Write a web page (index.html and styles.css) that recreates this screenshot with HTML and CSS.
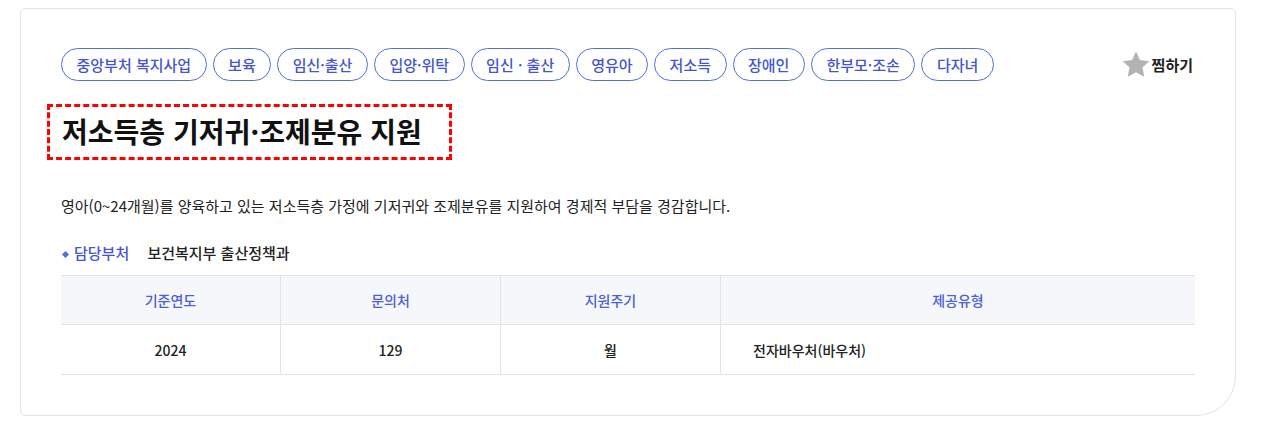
FILE: index.html
```html
<!DOCTYPE html>
<html lang="ko">
<head>
<meta charset="UTF-8">
<meta name="viewport" content="width=device-width, initial-scale=1.0">
<title>저소득층 기저귀·조제분유 지원</title>
<link rel="stylesheet" href="styles.css">
</head>
<body>
  <div class="card">
    <div class="top">
      <ul class="tags">
        <li>중앙부처 복지사업</li>
        <li>보육</li>
        <li>임신·출산</li>
        <li>입양·위탁</li>
        <li>임신 · 출산</li>
        <li>영유아</li>
        <li>저소득</li>
        <li>장애인</li>
        <li>한부모·조손</li>
        <li>다자녀</li>
      </ul>
      <button type="button" class="fav">
        <svg width="30" height="30" viewBox="0 0 24 24"><path d="M12 1.2l3.2 6.8 7.4.9-5.4 5.1 1.4 7.4L12 17.8l-6.6 3.6 1.4-7.4-5.4-5.1 7.4-.9z" fill="#b3b3b3"/></svg>
        찜하기
      </button>
    </div>

    <h2 class="title">저소득층 기저귀·조제분유 지원</h2>

    <p class="desc">영아(0~24개월)를 양육하고 있는 저소득층 가정에 기저귀와 조제분유를 지원하여 경제적 부담을 경감합니다.</p>

    <div class="dept">
      <span class="dept-label">담당부처</span>
      <span class="dept-name">보건복지부 출산정책과</span>
    </div>

    <table class="info">
      <thead>
        <tr>
          <th class="c1">기준연도</th>
          <th class="c2">문의처</th>
          <th class="c3">지원주기</th>
          <th>제공유형</th>
        </tr>
      </thead>
      <tbody>
        <tr>
          <td>2024</td>
          <td>129</td>
          <td>월</td>
          <td class="left">전자바우처(바우처)</td>
        </tr>
      </tbody>
    </table>
  </div>
</body>
</html>
```

FILE: styles.css
```css
body {
  margin: 0;
  background: #fff;
  font-family: "Noto Sans CJK KR", "Noto Sans", sans-serif;
  color: #222;
}
.card {
  margin: 8px 28px 0 20px;
  padding: 39px 40px 39px 40px;
  border: 1px solid #e2e2e2;
  border-radius: 6px 6px 40px 6px;
  height: 328px;
}
.top {
  display: flex;
  align-items: center;
  justify-content: space-between;
}
.tags {
  display: flex;
  gap: 6px;
  margin: 0;
  padding: 0;
  list-style: none;
}
.tags li {
  height: 33px;
  box-sizing: border-box;
  padding: 0 14.5px;
  border: 1px solid #4f6fdc;
  border-radius: 17px;
  color: #4455cf;
  font-size: 15px;
  font-weight: 500;
  line-height: 31px;
  white-space: nowrap;
}
.fav {
  display: flex;
  align-items: center;
  gap: 1px;
  margin-right: 2px;
  padding: 0;
  border: none;
  background: none;
  font-family: inherit;
  font-size: 15px;
  font-weight: 700;
  color: #222;
}
.title {
  display: inline-block;
  margin: 23px 0 0 -14px;
  padding: 7px 27px 8px 12px;
  border: 3px dashed #f00;
  font-size: 28px;
  font-weight: 700;
  line-height: 35px;
  color: #111;
}
.desc {
  margin: 34px 0 0;
  font-size: 15px;
  line-height: 24px;
}
.dept {
  margin-top: 23px;
  font-size: 15px;
  line-height: 24px;
}
.dept-label {
  position: relative;
  padding-left: 13px;
  margin-right: 14px;
  color: #4455cf;
  font-weight: 500;
}
.dept-label::before {
  content: "";
  position: absolute;
  left: 2px;
  top: 10px;
  width: 5px;
  height: 5px;
  background: #4f6fdc;
  transform: rotate(45deg);
}
.dept-name {
  font-weight: 500;
}
.info {
  width: 100%;
  margin-top: 10px;
  border-collapse: collapse;
  font-size: 14px;
}
.info th, .info td {
  padding: 0;
  border: 1px solid #e2e2e2;
  text-align: center;
}
.info th {
  height: 48px;
  background: #f6f7fb;
  color: #4c5fd8;
  font-weight: 500;
}
.info td {
  height: 49px;
  font-weight: 500;
  color: #222;
}
.info th:first-child, .info td:first-child {
  border-left: none;
}
.info th:last-child, .info td:last-child {
  border-right: none;
}
.info .c1, .info .c2, .info .c3 {
  width: 219px;
}
.info td.left {
  text-align: left;
  padding-left: 32px;
}
```
